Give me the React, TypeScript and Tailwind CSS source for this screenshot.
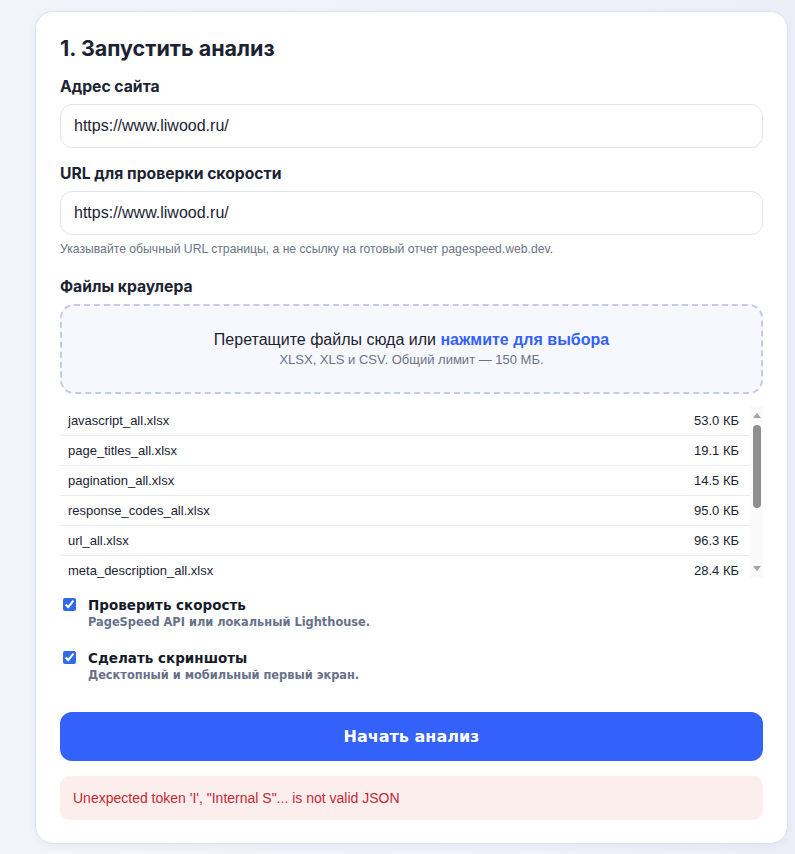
import { useState } from "react";

const files = [
  { name: "javascript_all.xlsx", size: "53.0 КБ" },
  { name: "page_titles_all.xlsx", size: "19.1 КБ" },
  { name: "pagination_all.xlsx", size: "14.5 КБ" },
  { name: "response_codes_all.xlsx", size: "95.0 КБ" },
  { name: "url_all.xlsx", size: "96.3 КБ" },
  { name: "meta_description_all.xlsx", size: "28.4 КБ" },
];

const sans = "font-['Liberation_Sans',Arial,sans-serif]";
const heading = "font-['Inter',sans-serif]";
const ui = "font-['DejaVu_Sans',Verdana,sans-serif]";

function Field({ label, value, hint, first }: { label: string; value: string; hint?: string; first?: boolean }) {
  return (
    <div className={first ? "mt-[15px]" : "mt-[16px]"}>
      <label className={`block text-[15.7px] font-bold leading-[20px] text-[#1b2333] ${heading}`}>{label}</label>
      <input defaultValue={value} className="mt-[7px] block h-[44px] w-full rounded-[12px] border border-[#dfe4f1] bg-white px-[13px] text-[16px] text-[#1b2333] outline-none" />
      {hint && <p className="mt-[6px] text-[12.2px] leading-[16px] text-[#6b7384]">{hint}</p>}
    </div>
  );
}

function Option({ title, note }: { title: string; note: string }) {
  const [on, setOn] = useState(true);
  return (
    <label className={`flex items-start gap-[12px] pl-[3px] ${ui}`}>
      <input type="checkbox" checked={on} onChange={() => setOn(!on)} className="mt-[2px] size-[13px] accent-[#2f6ae8]" />
      <span>
        <span className="block text-[13.5px] font-bold leading-[18px] text-[#151b2b]">{title}</span>
        <span className="block text-[11.4px] font-bold leading-[16px] text-[#68718a]">{note}</span>
      </span>
    </label>
  );
}

export default function App() {
  return (
    <div className={`min-h-[854px] bg-gradient-to-r from-[#f3f5fb] to-[#eceff8] pt-[11px] pb-[10px] pl-[35px] ${sans}`}>
      <div className="w-[753px] rounded-[18px] border border-[#dde2f0] bg-white px-[24px] pt-[22px] pb-[23px] shadow-[0_2px_8px_rgba(30,45,90,0.05)]">
        <h2 className={`text-[21.5px] font-bold leading-[28px] text-[#1b2333] ${heading}`}>1. Запустить анализ</h2>
        <Field first label="Адрес сайта" value="https://www.liwood.ru/" />
        <Field label="URL для проверки скорости" value="https://www.liwood.ru/" hint="Указывайте обычный URL страницы, а не ссылку на готовый отчет pagespeed.web.dev." />

        <div className={`mt-[20px] text-[15.7px] font-bold leading-[20px] text-[#1b2333] ${heading}`}>Файлы краулера</div>
        <div className="mt-[7px] flex h-[90px] flex-col items-center justify-center rounded-[14px] border-2 border-dashed border-[#c4cbe6] bg-[#f7f8fd]">
          <p className="text-[16px] leading-[20px] text-[#1b2333]">
            Перетащите файлы сюда или <span className="font-bold text-[#3461f9]">нажмите для выбора</span>
          </p>
          <p className="mt-[2px] text-[13px] leading-[16px] text-[#6b7384]">XLSX, XLS и CSV. Общий лимит — 150 МБ.</p>
        </div>

        <div className="mt-[12px] flex h-[172px]">
          <div className="flex-1 overflow-hidden">
            {files.map((f) => (
              <div key={f.name} className="flex h-[30px] shrink-0 items-center justify-between border-b border-[#e9ecf6] pl-[8px] pr-[11px] pt-[1px] text-[13px] text-[#1b2333]">
                <span>{f.name}</span>
                <span>{f.size}</span>
              </div>
            ))}
          </div>
          {/* scrollbar */}
          <div className="flex w-[13px] flex-col items-center bg-[#fafafa] pt-[7px] pb-[7px]">
            <svg width="8" height="5" viewBox="0 0 8 5"><path d="M4 0L8 5H0Z" fill="#a3a3a3" /></svg>
            <div className="mt-[7px] h-[83px] w-[8px] rounded-full bg-[#8f8f8f]" />
            <div className="flex-1" />
            <svg width="8" height="5" viewBox="0 0 8 5"><path d="M0 0H8L4 5Z" fill="#a3a3a3" /></svg>
          </div>
        </div>

        <div className="mt-[18px] flex flex-col gap-[19px]">
          <Option title="Проверить скорость" note="PageSpeed API или локальный Lighthouse." />
          <Option title="Сделать скриншоты" note="Десктопный и мобильный первый экран." />
        </div>

        <button className={`mt-[29px] h-[49px] w-full rounded-[12px] bg-[#3461f9] text-[16px] font-bold text-white ${ui}`}>Начать анализ</button>

        <div className="mt-[15px] flex h-[44px] items-center rounded-[10px] bg-[#fdeeee] px-[13px] text-[14px] text-[#c3282f]">
          Unexpected token 'I', "Internal S"... is not valid JSON
        </div>
      </div>
    </div>
  );
}
